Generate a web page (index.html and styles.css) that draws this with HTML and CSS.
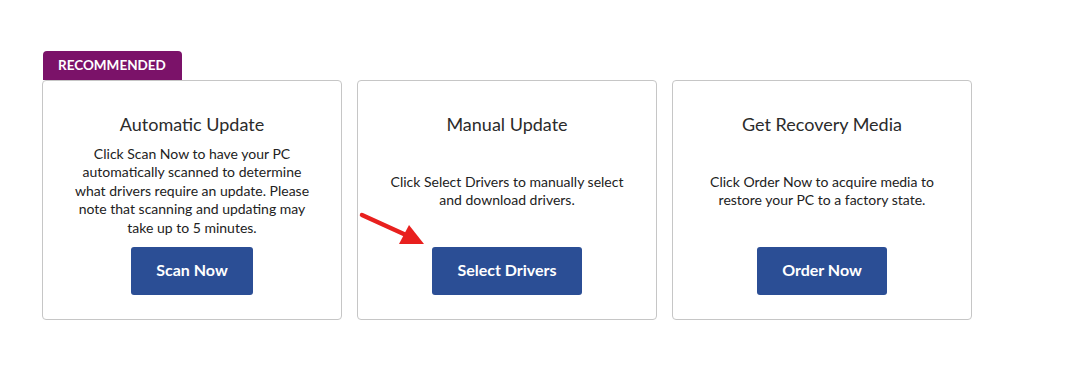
FILE: index.html
```html
<!DOCTYPE html>
<html lang="en">
  <head>
    <meta charset="UTF-8" />
    <meta name="viewport" content="width=device-width, initial-scale=1.0" />
    <title>Driver Update Options</title>
    <link rel="stylesheet" href="styles.css">
  </head>
  <body>
    <div class="container">
      <div class="options">
        <div class="option-col">
          <div class="badge">RECOMMENDED</div>
          <div class="option-card">
            <h3 class="option-title">Automatic Update</h3>
            <p class="option-text">
              Click Scan Now to have your PC automatically scanned to determine
              what drivers require an update. Please note that scanning and
              updating may take up to 5 minutes.
            </p>
            <button class="option-button">Scan Now</button>
          </div>
        </div>

        <div class="option-col">
          <div class="option-card">
            <h3 class="option-title">Manual Update</h3>
            <p class="option-text">
              Click Select Drivers to manually select and download drivers.
            </p>
            <button class="option-button">Select Drivers</button>
          </div>
          <!-- annotation arrow -->
          <svg class="arrow" width="70" height="40" viewBox="0 0 70 40">
            <line x1="3" y1="9" x2="47" y2="29" stroke="#e8201e" stroke-width="4.5" stroke-linecap="round" />
            <polygon points="65,38 40,38 50,19" fill="#e8201e" />
          </svg>
        </div>

        <div class="option-col">
          <div class="option-card">
            <h3 class="option-title">Get Recovery Media</h3>
            <p class="option-text">
              Click Order Now to acquire media to restore your PC to a factory state.
            </p>
            <button class="option-button">Order Now</button>
          </div>
        </div>
      </div>
    </div>
  </body>
</html>
```

FILE: styles.css
```css
* {
  margin: 0;
  padding: 0;
  box-sizing: border-box;
}

body {
  font-family: Lato, "Open Sans", "Liberation Sans", sans-serif;
  background: #fff;
  color: #222;
}

.container {
  padding: 51px 42px;
}

.options {
  display: flex;
  align-items: flex-end;
  gap: 15px;
}

.option-col {
  display: flex;
  flex-direction: column;
  position: relative;
}

.badge {
  align-self: flex-start;
  margin-left: 1px;
  background: #7b1269;
  color: #fff;
  font-size: 13.5px;
  font-weight: bold;
  line-height: 29px;
  height: 29px;
  padding: 0 16px 0 15px;
  border-radius: 4px 4px 0 0;
}

.option-card {
  width: 300px;
  height: 240px;
  border: 1px solid #c6c6c6;
  border-radius: 4px;
  padding: 32px 30px 24px;
  display: flex;
  flex-direction: column;
  align-items: center;
  text-align: center;
}

.option-title {
  font-size: 18px;
  font-weight: normal;
  line-height: 22px;
  color: #2b2b2b;
}

.option-text {
  flex: 1;
  display: flex;
  align-items: center;
  font-size: 14px;
  line-height: 18.5px;
  color: #222;
}

.option-button {
  height: 48px;
  padding: 0 25px 3px;
  background: #2b4e95;
  color: #fff;
  border: none;
  border-radius: 3px;
  font-family: inherit;
  font-size: 16px;
  font-weight: bold;
  cursor: pointer;
}

.arrow {
  position: absolute;
  left: 2px;
  top: 126px;
}
```
